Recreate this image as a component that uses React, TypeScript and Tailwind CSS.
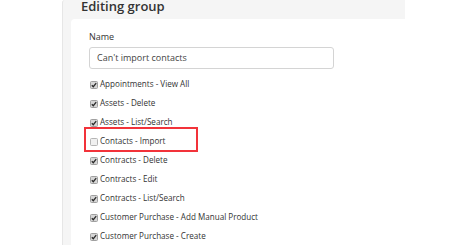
import React from "react";

const items: { label: string; checked: boolean }[] = [
  { label: "Appointments - View All", checked: true },
  { label: "Assets - Delete", checked: true },
  { label: "Assets - List/Search", checked: true },
  { label: "Contacts - Import", checked: false },
  { label: "Contracts - Delete", checked: true },
  { label: "Contracts - Edit", checked: true },
  { label: "Contracts - List/Search", checked: true },
  { label: "Customer Purchase - Add Manual Product", checked: true },
  { label: "Customer Purchase - Create", checked: true },
];

function Box({ checked }: { checked: boolean }) {
  return checked ? (
    <span className="flex h-[8px] w-[8px] items-center justify-center rounded-[1.5px] border border-[#a0a0a0] bg-[#d6d6d6]">
      <svg width="6" height="6" viewBox="0 0 6 6">
        <path d="M0.8 3.2 L2.3 4.7 L5.2 1.1" fill="none" stroke="#2a2a2a" strokeWidth="1.3" />
      </svg>
    </span>
  ) : (
    <span className="h-[8px] w-[8px] rounded-[1.5px] border border-[#b5b5b5] bg-[#f0f0f0]" />
  );
}

export default function App() {
  return (
    <div
      className="flex h-[245px] w-[450px] overflow-hidden bg-white text-[#333]"
      style={{ fontFamily: '"Open Sans", "Noto Sans", sans-serif' }}
    >
      <div className="w-[62px] shrink-0" />
      <div className="flex w-[343px] shrink-0 flex-col rounded-tl-[3px] border-l border-[#e6e6e6] bg-[#f5f5f5]">
        <div className="h-[19px] shrink-0 pl-[18px]">
          <div className="-mt-[3px] text-[13px] font-semibold leading-[18px] text-[#333]">Editing group</div>
        </div>
        <div className="flex flex-1 pl-[8px]">
          <div className="flex-1 rounded-tl-[4px] bg-white pl-[18px] pt-[12px]">
            <div className="text-[9px] leading-[12px] text-[#333]">Name</div>
            <div className="mt-[4px] flex h-[22px] w-[245px] items-center rounded-[3px] border border-[#d4d4d4] pl-[7px] text-[9px] text-[#444]">
              Can't import contacts
            </div>
            <div className="mt-[6px] flex flex-col">
              {items.map((it) => (
                <div key={it.label} className="relative flex h-[19px] items-center gap-[2px] pl-[1px]">
                  <Box checked={it.checked} />
                  <span className="text-[8.1px] leading-none text-[#333]">{it.label}</span>
                  {!it.checked && (
                    <div className="absolute left-[-5px] top-[-5px] h-[25px] w-[114px] border-2 border-[#f2333a]" />
                  )}
                </div>
              ))}
            </div>
          </div>
        </div>
      </div>
    </div>
  );
}
